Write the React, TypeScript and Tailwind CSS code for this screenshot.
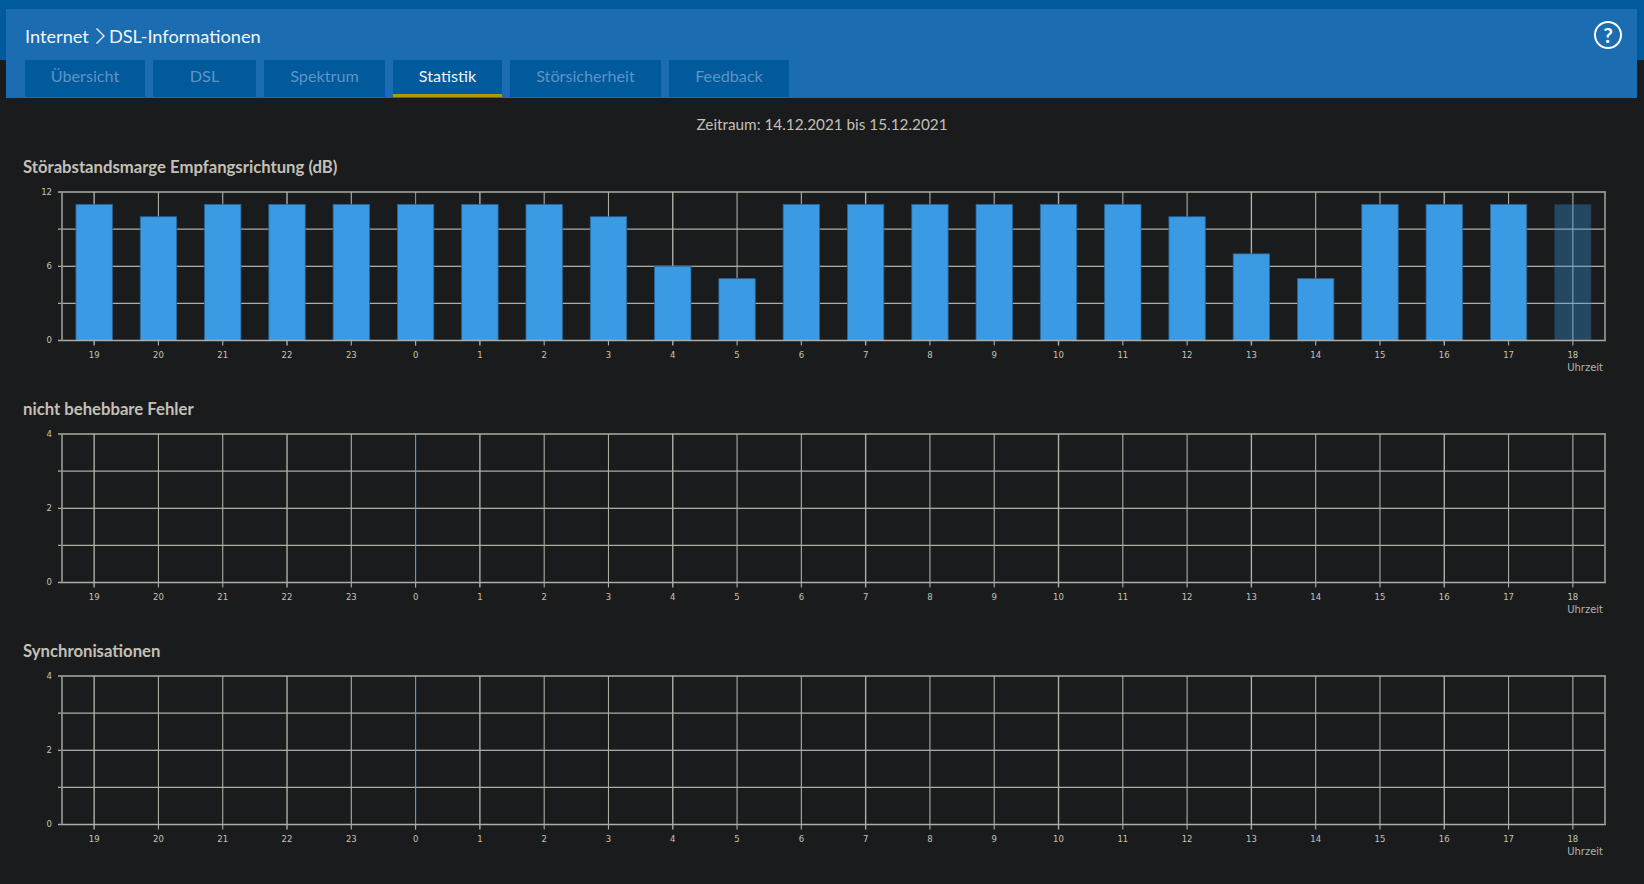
const HOURS = [19, 20, 21, 22, 23, 0, 1, 2, 3, 4, 5, 6, 7, 8, 9, 10, 11, 12, 13, 14, 15, 16, 17, 18];
const MARGIN = [11, 10, 11, 11, 11, 11, 11, 11, 10, 6, 5, 11, 11, 11, 11, 11, 11, 10, 7, 5, 11, 11, 11, 11];

const LEFT = 62;
const RIGHT = 1605;
const TOP = 6;
const BOTTOM = 154.5;
const STEP = (RIGHT - LEFT) / 24;
const LINE = "#aeaea6";

function Chart({ max, mid, bars }: { max: number; mid: number; bars?: number[] }) {
  const h = BOTTOM - TOP;
  return (
    <svg width="1644" height="194" viewBox="0 0 1644 194" className="block" fontFamily="'DejaVu Sans', sans-serif">
      {[0.25, 0.5, 0.75].map((f) => (
        <line key={f} x1={58} x2={RIGHT} y1={TOP + h * f} y2={TOP + h * f} stroke={f === 0.5 ? "#d8d8d0" : LINE} strokeWidth={f === 0.5 ? 1 : 1.4} />
      ))}
      {HOURS.map((hour, i) => {
        const x = LEFT + STEP * (i + 0.5);
        return (
          <g key={hour}>
            <line x1={x} x2={x} y1={TOP} y2={BOTTOM + 5} stroke={hour === 0 ? "#5b9fd6" : LINE} strokeWidth={i % 3 === 0 ? 1.4 : 1.1} />
            {hour === 0 && <line x1={x} x2={x} y1={BOTTOM} y2={BOTTOM + 5} stroke={LINE} />}
            <text x={x} y={BOTTOM + 17} textAnchor="middle" fontSize="8.5" fill="#c4c4bc">{hour}</text>
          </g>
        );
      })}
      {bars?.map((v, i) => {
        const barH = (v / max) * h;
        return (
          <rect
            key={i}
            x={LEFT + STEP * (i + 0.5) - 18.2}
            y={BOTTOM - barH}
            width={36.4}
            height={barH}
            fill="#3a9ae3"
            stroke="#2a6595"
            strokeWidth={0.8}
            opacity={i === 23 ? 0.35 : 1}
          />
        );
      })}
      <line x1={58} x2={RIGHT + 1} y1={TOP} y2={TOP} stroke={LINE} strokeWidth={1.6} />
      <line x1={58} x2={RIGHT + 1} y1={BOTTOM} y2={BOTTOM} stroke={LINE} strokeWidth={1.6} />
      <line x1={LEFT} x2={LEFT} y1={TOP} y2={BOTTOM} stroke="#8e8e88" strokeWidth={1.8} />
      <line x1={RIGHT} x2={RIGHT} y1={TOP} y2={BOTTOM} stroke="#8e8e88" strokeWidth={1.8} />
      <text x={52} y={TOP + 2.5} textAnchor="end" fontSize="8.5" fill="#c4c4bc">{max}</text>
      <text x={52} y={TOP + h / 2 + 2.5} textAnchor="end" fontSize="8.5" fill="#c4c4bc">{mid}</text>
      <text x={52} y={BOTTOM + 2.5} textAnchor="end" fontSize="8.5" fill="#c4c4bc">0</text>
      <text x={1603} y={BOTTOM + 30} textAnchor="end" fontSize="10" fill="#b4b4ac">Uhrzeit</text>
    </svg>
  );
}

function Section({ title, children }: { title: string; children: React.ReactNode }) {
  return (
    <section className="h-[242px]">
      <h2 className="h-[24px] pl-[23px] pt-[1px] text-[16.7px] leading-[24px] font-bold text-[#c4c0b8]">{title}</h2>
      <div className="mt-[8px]">{children}</div>
    </section>
  );
}

const TABS = [
  { label: "Übersicht", w: "w-[120px]" },
  { label: "DSL", w: "w-[103px]" },
  { label: "Spektrum", w: "w-[121px]" },
  { label: "Statistik", w: "w-[109px]", active: true },
  { label: "Störsicherheit", w: "w-[151px]" },
  { label: "Feedback", w: "w-[120px]" },
];

export default function App() {
  return (
    <div className="h-[884px] overflow-hidden bg-[#191b1d] font-['Lato',sans-serif]">
      <header className="h-[60px] bg-[#005a9c] px-[6px] pt-[9px]">
        <div className="h-[89px] w-[1631px] bg-[#1b6cb0] pl-[19px]">
          <div className="flex h-[51px] items-center justify-between pr-[15px]">
            <div className="mt-[4px] flex items-center text-[18.2px] text-[#f2f5f8]">
              <span>Internet</span>
              <svg width="10" height="18" viewBox="0 0 10 18" className="ml-[6px] mr-[4px]" fill="none" stroke="#f2f5f8" strokeWidth="1.3">
                <path d="M1.5 1.5 9 9 1.5 16.5" />
              </svg>
              <span>DSL-Informationen</span>
            </div>
            <span className="flex h-[28px] w-[28px] items-center justify-center rounded-full border-2 border-white text-[21px] font-bold text-white">?</span>
          </div>
          <nav className="flex gap-[8px]">
            {TABS.map((tab) => (
              <div
                key={tab.label}
                className={`flex h-[37px] items-center justify-center border-b-[3px] bg-[#005a9c] pb-[2px] text-[16.2px] ${tab.w} ${tab.active ? "border-[#b09a0c] text-[#f2f5f8]" : "border-transparent text-[#5f94c4]"}`}
              >
                {tab.label}
              </div>
            ))}
          </nav>
        </div>
      </header>
      <main className="mt-[38px]">
        <p className="mb-[4px] flex h-[52px] items-center justify-center text-[15.3px] text-[#c4c0b8]">Zeitraum: 14.12.2021 bis 15.12.2021</p>
        <Section title="Störabstandsmarge Empfangsrichtung (dB)">
          <Chart max={12} mid={6} bars={MARGIN} />
        </Section>
        <Section title="nicht behebbare Fehler">
          <Chart max={4} mid={2} />
        </Section>
        <Section title="Synchronisationen">
          <Chart max={4} mid={2} />
        </Section>
      </main>
    </div>
  );
}
